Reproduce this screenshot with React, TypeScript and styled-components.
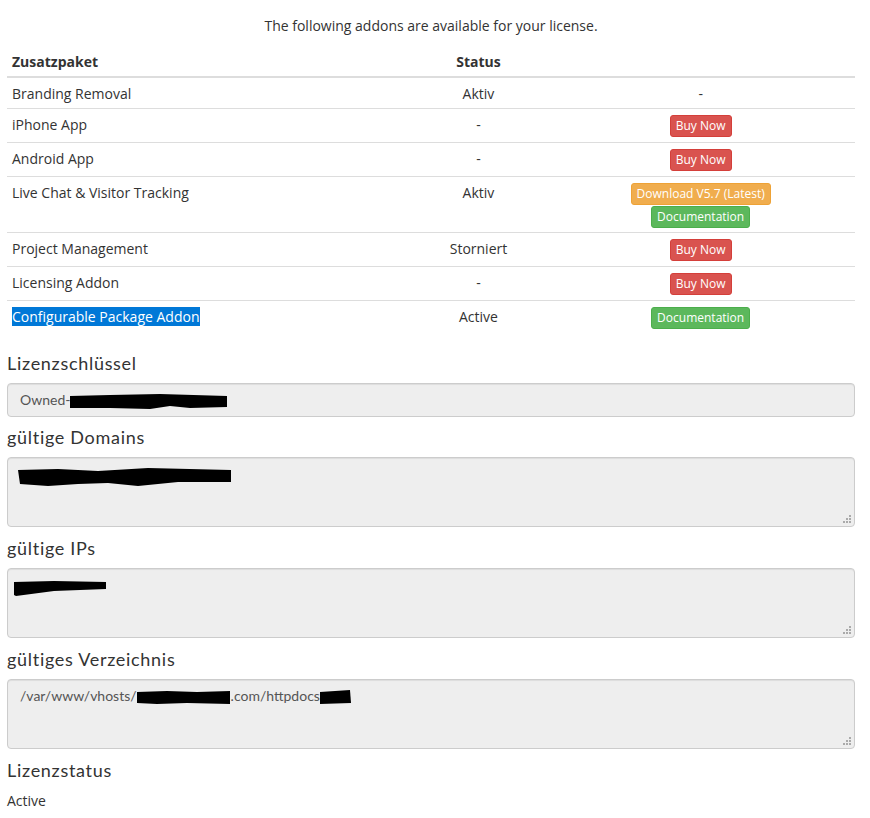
import React from 'react';
import styled, { createGlobalStyle } from 'styled-components';

const GlobalStyle = createGlobalStyle`
  body {
    margin: 0;
    background: #fff;
    font-family: "Open Sans", "Liberation Sans", sans-serif;
    font-size: 14px;
    line-height: 20px;
    color: #333;
  }
`;

const Page = styled.div`
  width: 848px;
  padding: 16px 15px 20px 7px;
`;

const Intro = styled.p`
  margin: 0 0 10px;
  text-align: center;
`;

const Table = styled.table`
  width: 100%;
  border-collapse: collapse;
  margin-bottom: 19px;
`;

const Th = styled.th<{ $align?: 'left' | 'center'; $width: string }>`
  width: ${(p) => p.$width};
  padding: 6px 5px 4px;
  text-align: ${(p) => p.$align || 'left'};
  font-weight: 700;
  border-bottom: 2px solid #ddd;
  vertical-align: bottom;
`;

const Td = styled.td<{ $center?: boolean }>`
  padding: 6px 5px 4px;
  text-align: ${(p) => (p.$center ? 'center' : 'left')};
  vertical-align: top;
  border-top: 1px solid #ddd;
  tr:first-child > & {
    border-top: none;
  }
`;

const Actions = styled.div`
  display: flex;
  flex-direction: column;
  align-items: center;
  gap: 1px;
  min-height: 23px;
`;

const colors = {
  danger: { bg: '#d9534f', border: '#d43f3a' },
  warning: { bg: '#f0ad4e', border: '#eea236' },
  success: { bg: '#5cb85c', border: '#4cae4c' },
};

const Button = styled.a<{ $kind: keyof typeof colors }>`
  display: inline-block;
  padding: 1px 5px;
  font-size: 12px;
  line-height: 18px;
  color: #fff;
  border-radius: 3px;
  text-decoration: none;
  background: ${(p) => colors[p.$kind].bg};
  border: 1px solid ${(p) => colors[p.$kind].border};
  cursor: pointer;
`;

const Selected = styled.span`
  background: #0078d7;
  color: #fff;
`;

const Label = styled.h4<{ $gap?: number }>`
  margin: 0 0 ${(p) => p.$gap ?? 10}px;
  font-family: Lato, "Open Sans", sans-serif;
  font-weight: 400;
  font-size: 18px;
  line-height: 20px;
  letter-spacing: 0.7px;
  color: #333;
`;

const Field = styled.div<{ $multi?: boolean }>`
  position: relative;
  box-sizing: border-box;
  height: ${(p) => (p.$multi ? '70px' : '34px')};
  padding: 6px 12px;
  margin-bottom: ${(p) => (p.$multi ? '11px' : '10px')};
  background: #eee;
  border: 1px solid #ccc;
  border-radius: 4px;
  box-shadow: inset 0 1px 1px rgba(0, 0, 0, 0.075);
  font-family: Lato, "Open Sans", sans-serif;
  font-size: 14px;
  line-height: 20px;
  color: #555;
  white-space: nowrap;
`;

const Grip = styled.svg`
  position: absolute;
  right: 3px;
  bottom: 3px;
`;

const Blot = styled.svg<{ $shift?: number; $lift?: number }>`
  display: inline-block;
  vertical-align: middle;
  margin-left: ${(p) => p.$shift || 0}px;
  position: relative;
  top: ${(p) => p.$lift || 0}px;
`;

const StatusText = styled.div`
  margin: 0;
`;

const Redact: React.FC<{ w: number; h: number; d: string; shift?: number; lift?: number }> = ({
  w,
  h,
  d,
  shift,
  lift,
}) => (
  <Blot $shift={shift} $lift={lift} width={w} height={h} viewBox={`0 0 ${w} ${h}`}>
    <path d={d} fill="#000" />
  </Blot>
);

const ResizeGrip = () => (
  <Grip width="8" height="8" viewBox="0 0 8 8">
    <rect x="6" y="0" width="2" height="2" fill="#aaa" />
    <rect x="3" y="3" width="2" height="2" fill="#aaa" />
    <rect x="6" y="3" width="2" height="2" fill="#aaa" />
    <rect x="0" y="6" width="2" height="2" fill="#aaa" />
    <rect x="3" y="6" width="2" height="2" fill="#aaa" />
    <rect x="6" y="6" width="2" height="2" fill="#aaa" />
  </Grip>
);

type Row = {
  name: React.ReactNode;
  status: string;
  actions: { label: string; kind: keyof typeof colors }[];
};

const rows: Row[] = [
  { name: 'Branding Removal', status: 'Aktiv', actions: [] },
  { name: 'iPhone App', status: '-', actions: [{ label: 'Buy Now', kind: 'danger' }] },
  { name: 'Android App', status: '-', actions: [{ label: 'Buy Now', kind: 'danger' }] },
  {
    name: 'Live Chat & Visitor Tracking',
    status: 'Aktiv',
    actions: [
      { label: 'Download V5.7 (Latest)', kind: 'warning' },
      { label: 'Documentation', kind: 'success' },
    ],
  },
  { name: 'Project Management', status: 'Storniert', actions: [{ label: 'Buy Now', kind: 'danger' }] },
  { name: 'Licensing Addon', status: '-', actions: [{ label: 'Buy Now', kind: 'danger' }] },
  {
    name: <Selected>Configurable Package Addon</Selected>,
    status: 'Active',
    actions: [{ label: 'Documentation', kind: 'success' }],
  },
];

export default function App() {
  return (
    <Page>
      <GlobalStyle />
      <Intro>The following addons are available for your license.</Intro>
      <Table>
        <thead>
          <tr>
            <Th $width="47.6%">Zusatzpaket</Th>
            <Th $width="16%" $align="center">Status</Th>
            <Th $width="36.4%" />
          </tr>
        </thead>
        <tbody>
          {rows.map((r, i) => (
            <tr key={i}>
              <Td>{r.name}</Td>
              <Td $center>{r.status}</Td>
              <Td $center>
                {r.actions.length === 0 ? (
                  '-'
                ) : (
                  <Actions>
                    {r.actions.map((a) => (
                      <Button key={a.label} $kind={a.kind}>
                        {a.label}
                      </Button>
                    ))}
                  </Actions>
                )}
              </Td>
            </tr>
          ))}
        </tbody>
      </Table>

      <Label>Lizenzschlüssel</Label>
      <Field>
        Owned-
        <Redact w={158} h={17} d="M0 3 L40 2 L90 1 L157 3 L157 14 L120 15 L100 13 L80 16 L40 15 L0 15 Z" />
      </Field>

      <Label>gültige Domains</Label>
      <Field $multi>
        <Redact
          shift={-2}
          lift={2}
          w={214}
          h={22}
          d="M0 4 L40 3 L80 5 L130 2 L213 4 L213 16 L160 16 L120 20 L90 17 L60 18 L30 20 L2 18 Z"
        />
        <ResizeGrip />
      </Field>

      <Label>gültige IPs</Label>
      <Field $multi>
        <Redact shift={-6} lift={2} w={93} h={18} d="M0 3 L40 2 L92 3 L92 10 L40 12 L2 17 L0 16 Z" />
        <ResizeGrip />
      </Field>

      <Label>gültiges Verzeichnis</Label>
      <Field $multi>
        /var/www/vhosts/
        <Redact w={94} h={15} d="M0 2 L30 1 L60 2 L93 1 L93 14 L50 13 L20 14 L0 13 Z" />
        .com/httpdocs
        <Redact w={31} h={15} d="M0 2 L30 0 L31 13 L0 14 Z" />
        <ResizeGrip />
      </Field>

      <Label $gap={11}>Lizenzstatus</Label>
      <StatusText>Active</StatusText>
    </Page>
  );
}
